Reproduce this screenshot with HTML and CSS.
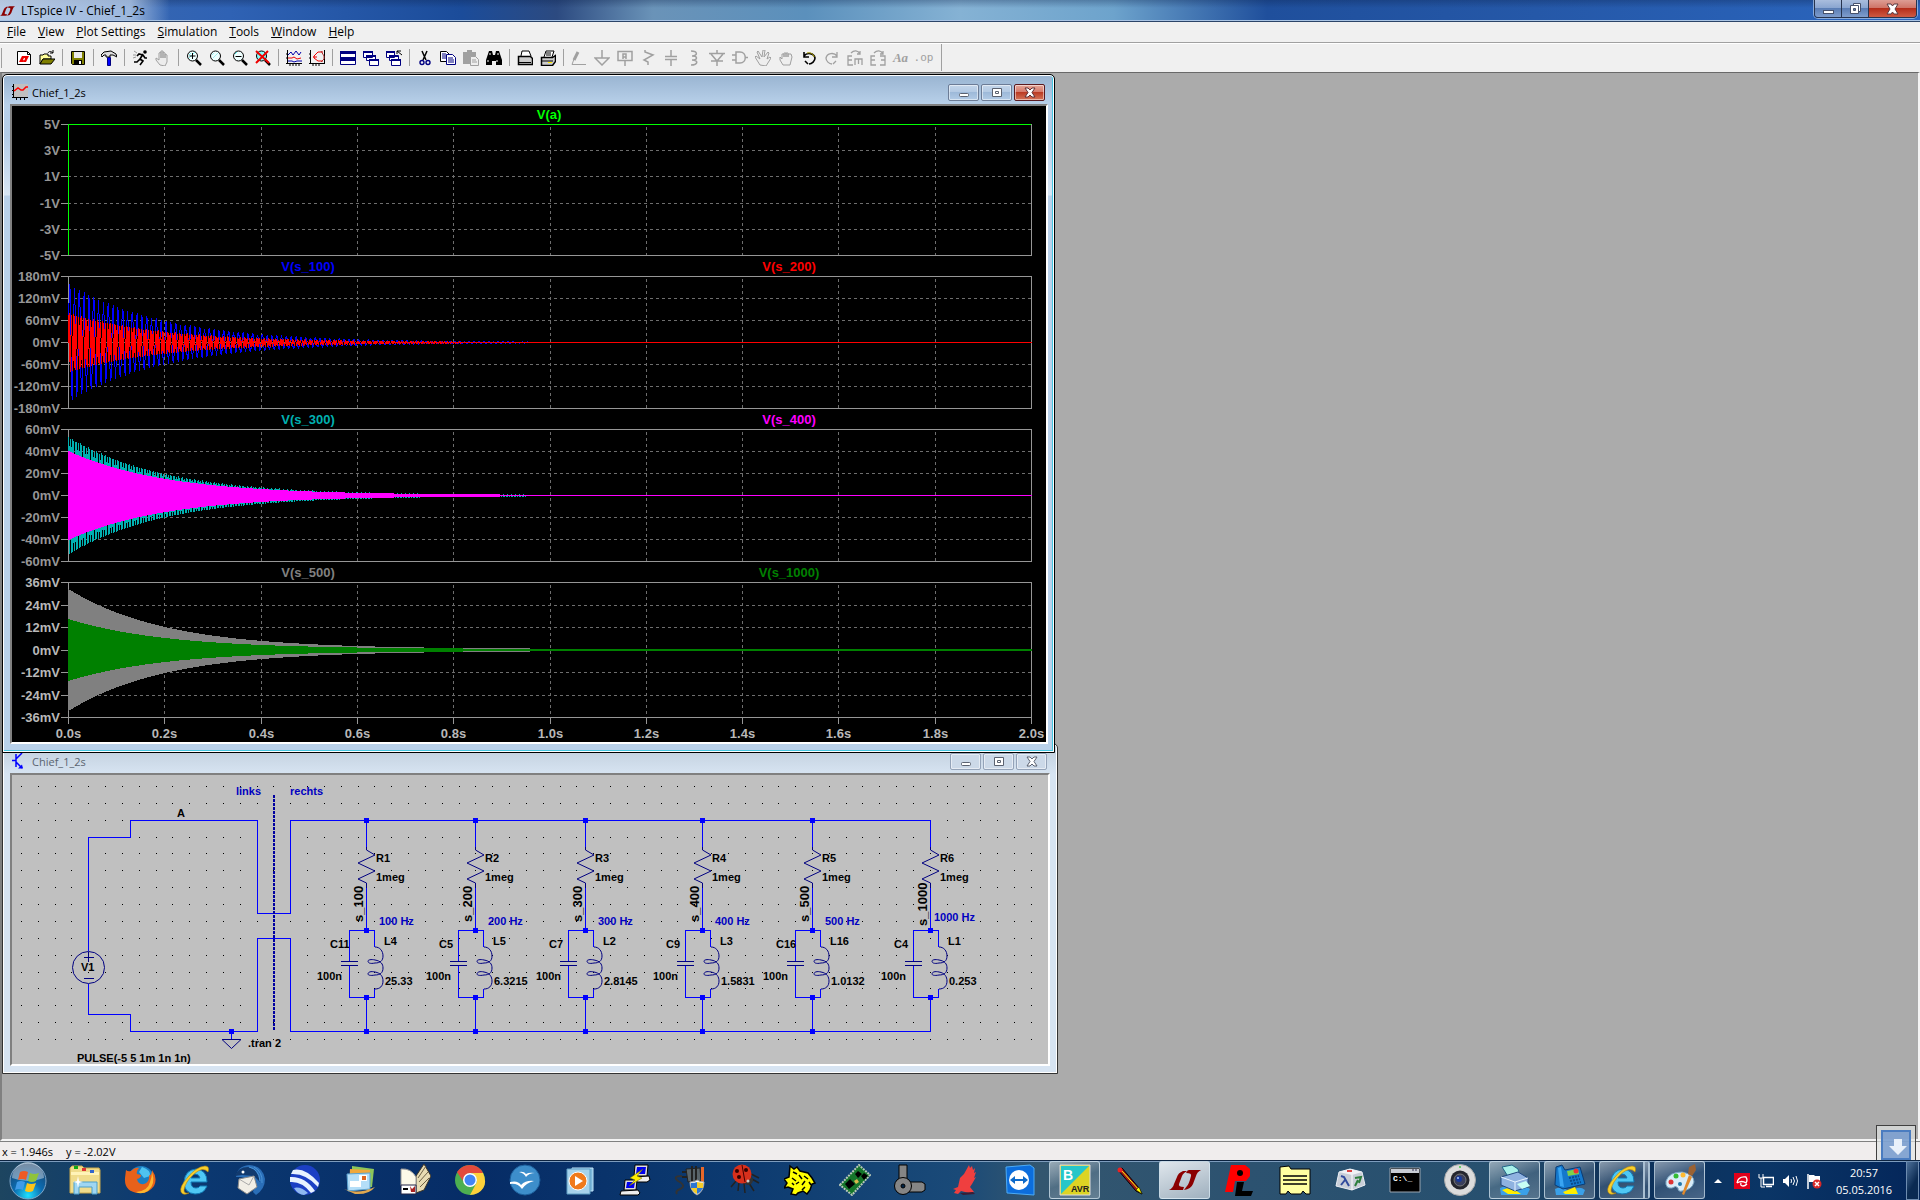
FILE: index.html
```html
<!DOCTYPE html>
<html lang="de">
<head>
    <meta charset="UTF-8">
    <meta name="viewport" content="width=device-width, initial-scale=1.0">
    <title>LTspice IV - Chief_1_2s</title>
    <link rel="stylesheet" href="styles.css">
</head>
<body>
    <!-- Title bar -->
    <header class="titlebar">
        <svg class="app-logo" viewBox="0 0 32 20" aria-hidden="true"><path fill="#8b0000" d="M20 0L14 1Q9 3 8 7L5 14Q4 18 0 20H14L15 17Q9 17 10 14L13 6Q14 3 20 0zM19 0H32Q28 2 27 6L24 14Q22 19 15 20L18 16Q20 14 22 6 23 3 17 3z"/></svg>
        <h1>LTspice IV - Chief_1_2s</h1>
        <div class="caption-buttons">
            <button aria-label="Minimize"><svg width="13" height="12"><rect x="1.5" y="7.5" width="10" height="3" fill="#fff" stroke="#47516b"/></svg></button>
            <button aria-label="Restore"><svg width="13" height="13"><path d="M4.5 1.5h7v8h-7z" fill="#fff" stroke="#47516b"/><path d="M1.5 3.5h8v8h-8z" fill="#fff" stroke="#47516b"/><path d="M4.5 6.5h2v2h-2z" fill="#5e7fb5" stroke="#47516b"/></svg></button>
            <button class="close" aria-label="Close"><svg width="13" height="12"><path d="M1 1h4l1.500 2L8 1h4L9 6l3 5H8L6.500 9 5 11H1l3-5z" fill="#fff" stroke="#5b3a42"/></svg></button>
        </div>
    </header>

    <nav class="menubar">
        <button><u>F</u>ile</button>
        <button><u>V</u>iew</button>
        <button><u>P</u>lot Settings</button>
        <button><u>S</u>imulation</button>
        <button><u>T</u>ools</button>
        <button><u>W</u>indow</button>
        <button><u>H</u>elp</button>
    </nav>

    <!-- Toolbar -->
    <div class="toolbar">
        <div class="group">
            <button aria-label="New schematic"><svg viewBox="0 0 16 16"><path d="M1.500 1.500h10l3 3v10h-13z" fill="#fff" stroke="#000"/><path d="M11.500 1.500v3h3" fill="none" stroke="#000"/><path d="M6 6h3l-2 4h1l-1 2H3l1-2zM8 6h5l-1 2-2 4H7l2-3z" fill="#e00"/></svg></button>
            <button aria-label="Open"><svg viewBox="0 0 16 16"><path d="M1 5h3l1-1h4v2h3v3H4l-3 5z" fill="#ff9" stroke="#000"/><path d="M1 14l3-5h12l-4 5z" fill="#808000" stroke="#000"/><path d="M9 3c1-2 3-2 5 0M14 0v3h-3" fill="none" stroke="#000"/></svg></button>
        </div>
        <div class="group">
            <button aria-label="Save"><svg viewBox="0 0 16 16"><path d="M1.500 1.500h13v13h-12l-1-1z" fill="#808000" stroke="#000"/><path d="M4 2h8v6H4z" fill="#ececec"/><path d="M4 10h8v5H4z" fill="#000"/><path d="M9 11h2v3H9z" fill="#fff"/></svg></button>
        </div>
        <div class="group">
            <button aria-label="Control panel"><svg viewBox="0 0 16 16"><path d="M0 5l3-3 7-1 5 3 1 3-4-2H9v2H5V5H3L1 7z" fill="#ddd" stroke="#000"/><path d="M6.500 7.500h3v8h-3z" fill="#00f" stroke="#000080"/></svg></button>
        </div>
        <div class="group">
            <button aria-label="Run"><svg viewBox="0 0 16 16"><circle cx="13" cy="2" r="1.800"/><path d="M11 4L8 9l3 2-3 4M8 9l-3 3H2M11 5L7 4 5 6M11 5l2 3h2" fill="none" stroke="#000" stroke-width="1.600"/><path d="M2 1l3 2M1 5h3M1 8l3-1" stroke="#999"/></svg></button>
            <button disabled aria-label="Halt"><svg viewBox="0 0 16 16"><path d="M5 15L1 10V8l3 2V3l2-1v6V1h2v7-6l2 1v5-4l2 1v7l-2 4z" fill="#ececec" stroke="#a0a0a0"/></svg></button>
        </div>
        <div class="group">
            <button aria-label="Zoom in"><svg viewBox="0 0 16 16"><circle cx="6.500" cy="6" r="5" fill="#efffff" stroke="#000"/><path d="M3 5l2-2M3 8l6-6" stroke="#7fefef"/><path d="M6.500 3v6M3.500 6h6" stroke="#000"/><path d="M10 10l5 5" stroke="#000" stroke-width="2.500"/></svg></button>
            <button aria-label="Pan"><svg viewBox="0 0 16 16"><circle cx="6.500" cy="6" r="5" fill="#efffff" stroke="#000"/><path d="M3 5l2-2M4 8l5-5" stroke="#9feeee"/><path d="M10 10l5 5" stroke="#000" stroke-width="2.500"/></svg></button>
            <button aria-label="Zoom back"><svg viewBox="0 0 16 16"><circle cx="6.500" cy="6" r="5" fill="#efffff" stroke="#000"/><path d="M3 4l2-2" stroke="#4fe0e0"/><path d="M3.500 6.500h6" stroke="#000"/><path d="M10 10l5 5" stroke="#000" stroke-width="2.500"/></svg></button>
            <button aria-label="Zoom to fit"><svg viewBox="0 0 16 16"><circle cx="6.500" cy="6" r="5" fill="#8ff" stroke="#000"/><path d="M10 10l5 5" stroke="#000" stroke-width="2.500"/><path d="M1 1l13 12M13 1L1 13" stroke="#e00" stroke-width="2"/></svg></button>
        </div>
        <div class="group">
            <button aria-label="Autorange"><svg viewBox="0 0 16 16"><path d="M1.500 0v14M0 13.500h16M4 13v3M7 13v3M10 13v3M13 13v3M0 4h2M0 8h2" stroke="#000"/><path d="M2 5l3-3 2 3 3-4 3 4 2-3" fill="none" stroke="#00a"/><path d="M2 8h4l2-1 3 2 4-1" fill="none" stroke="#e00"/><path d="M2 11h4l2 1 3-1h5" fill="none" stroke="#00a"/></svg></button>
            <button aria-label="FFT"><svg viewBox="0 0 16 16"><path d="M1.500 0v14M0 13.500h16M4 13v3M7 13v3M10 13v3M0 4h2M0 8h2" stroke="#000"/><path d="M15.500 0v14" stroke="#000"/><path d="M4 7h4M14 2H9L5 6v2l4 3h5" fill="none" stroke="#e00"/><path d="M12 1l3 5v3l-3 3" fill="none" stroke="#a33"/></svg></button>
        </div>
        <div class="group">
            <button aria-label="Tile"><svg viewBox="0 0 16 16"><path d="M.5 1.500h15v13H.5z" fill="#fff" stroke="#000080"/><path d="M0 1h16v3H0zM0 7h16v4H0z" fill="#000080"/></svg></button>
            <button aria-label="Cascade"><svg viewBox="0 0 16 16"><g fill="#fff" stroke="#000080"><path d="M.5 1.500h9v6h-9zM3.500 5.500h9v5h-9zM6.500 9.500h9v6h-9z"/></g><path d="M0 1h10v2H0zM3 5h10v2H3zM6 9h10v2H6z" fill="#000080"/></svg></button>
            <button aria-label="Close all"><svg viewBox="0 0 16 16"><g fill="#fff" stroke="#000080"><path d="M.5 1.500h8v6h-8zM3.500 5.500h9v5h-9zM5.500 9.500h9v6h-9z"/></g><path d="M0 1h9v2H0zM3 5h9v2H3zM5 9h10v2H5z" fill="#000080"/><path d="M16 5l-5-4M11 4V1h4" fill="none" stroke="#000"/></svg></button>
        </div>
        <div class="group">
            <button aria-label="Cut"><svg viewBox="0 0 16 16"><path d="M5 1l4 9M10 1L6 10" stroke="#000" stroke-width="1.500"/><g fill="none" stroke="#000080" stroke-width="1.400"><circle cx="5" cy="12.500" r="2"/><circle cx="11" cy="12.500" r="2"/></g></svg></button>
            <button aria-label="Copy"><svg viewBox="0 0 16 16"><path d="M.5 1.500h6l3 3v7h-9z" fill="#fff" stroke="#000"/><path d="M6.500 4.500h6l3 3v7h-9z" fill="#fff" stroke="#000080"/><path d="M2 4h4M2 6h4M2 8h4M8 8h5M8 10h6M8 12h6" stroke="#000080"/></svg></button>
            <button disabled aria-label="Paste"><svg viewBox="0 0 16 16"><path d="M0 2h4V0h5v2h4v12H0z" fill="#a0a0a0"/><path d="M7.500 6.500h5l3 3v6h-8z" fill="#eee" stroke="#a0a0a0"/><path d="M9 10h4M9 12h5" stroke="#a0a0a0"/></svg></button>
            <button aria-label="Find"><svg viewBox="0 0 16 16"><path d="M3 1h3l1 4h2l1-4h3l3 9v5h-6v-4H6v4H0v-5z"/><path d="M4 3v2M12 3v2M2 10v2M11 10v2" stroke="#fff"/></svg></button>
        </div>
        <div class="group">
            <button aria-label="Print setup"><svg viewBox="0 0 16 16"><path d="M4 6l1-5h7l2 5" fill="#fff" stroke="#000"/><path d="M1.500 6.500h12l2 2v6h-14z" fill="#ccc" stroke="#000" stroke-width="1.500"/><path d="M2 12.500h12" stroke="#000"/></svg></button>
            <button aria-label="Print"><svg viewBox="0 0 16 16"><path d="M4 7l2-6h8l-2 6" fill="#fff" stroke="#000"/><path d="M1.500 7.500h11l3-2v6l-3 4h-11z" fill="#ccc" stroke="#000" stroke-width="1.500"/><path d="M6 3h5M6 5h5M2 11h11" stroke="#000"/><path d="M8 12.500h4" stroke="#fe0"/></svg></button>
        </div>
        <div class="group">
            <button disabled aria-label="Wire"><svg viewBox="0 0 16 16"><path d="M7 2L3 10" stroke="#a0a0a0" stroke-width="3"/><path d="M1 14.500L3 9M1 14.500h14" stroke="#a0a0a0"/></svg></button>
            <button disabled aria-label="Ground"><svg viewBox="0 0 16 16"><path d="M8 0v8M1 8h14l-7 7z" fill="none" stroke="#a0a0a0" stroke-width="1.500"/></svg></button>
            <button disabled aria-label="Label net"><svg viewBox="0 0 16 16"><path d="M1 1.500h14v9H1zM8 10v6M6 9V4h3v5M6 7h3" fill="none" stroke="#a0a0a0" stroke-width="1.500"/></svg></button>
            <button disabled aria-label="Resistor"><svg viewBox="0 0 16 16"><path d="M5 0v2l8 3-9 5 4 2v3" fill="none" stroke="#a0a0a0" stroke-width="1.500"/></svg></button>
            <button disabled aria-label="Capacitor"><svg viewBox="0 0 16 16"><path d="M8 0v6M2 6.500h12M2 9.500h12M8 10v6" stroke="#a0a0a0" stroke-width="1.500"/></svg></button>
            <button disabled aria-label="Inductor"><svg viewBox="0 0 16 16"><path d="M5 1c7 0 7 5 1 5 6 0 6 4 0 4 7 0 6 5-1 5" fill="none" stroke="#a0a0a0" stroke-width="1.500"/></svg></button>
            <button disabled aria-label="Diode"><svg viewBox="0 0 16 16"><path d="M8 0v3M8 11v5M0 3.500h16M2 4l6 7 6-7M2 11h12" fill="none" stroke="#a0a0a0" stroke-width="1.500"/></svg></button>
            <button disabled aria-label="Component"><svg viewBox="0 0 16 16"><path d="M4 2h4c7 0 7 11 0 11H4zM0 5h4M0 10h4M13 7.500h3" fill="none" stroke="#a0a0a0" stroke-width="1.500"/></svg></button>
            <button disabled aria-label="Move"><svg viewBox="0 0 16 16"><path d="M5 15L0 7l1-1 4 3-3-7 1-1 4 6 1-7h2l-1 7 4-5 1 1-2 6 3-2 1 1-5 8z" fill="#eee" stroke="#a0a0a0"/></svg></button>
            <button disabled aria-label="Drag"><svg viewBox="0 0 16 16"><path d="M5 15L2 10V7l2 2V4h2v3-4h2v4-4h2v4-3h3l1 3-2 8z" fill="#eee" stroke="#a0a0a0"/></svg></button>
            <button aria-label="Undo"><svg viewBox="0 0 16 16"><path d="M3 6c3-4 10-3 11 2 0 3-3 6-6 6M3 2v5h5M4 11l3 3" fill="none" stroke="#000" stroke-width="1.600"/><path d="M6 3c3-1 7 1 7 4" fill="none" stroke="#b8a800"/></svg></button>
            <button disabled aria-label="Redo"><svg viewBox="0 0 16 16"><path d="M13 6C10 2 3 3 2 8c0 3 3 6 6 6M13 2v5H8M12 11l-3 3" fill="none" stroke="#a0a0a0" stroke-width="1.300"/></svg></button>
            <button disabled aria-label="Rotate"><svg viewBox="0 0 16 16"><path d="M5 6H1v9h5M1 10h4M8 15V9h7v6M11.500 9v5M4 3c3-3 7-3 9 1M13 1v3h-3" fill="none" stroke="#a0a0a0" stroke-width="1.300"/></svg></button>
            <button disabled aria-label="Mirror"><svg viewBox="0 0 16 16"><path d="M5 6H1v9h5M1 10h4M10 6h5v9h-5M15 10h-4M4 3c3-3 7-3 9 1M13 1v3h-3" fill="none" stroke="#a0a0a0" stroke-width="1.300"/></svg></button>
            <button disabled aria-label="Text" class="text-tool">Aa</button>
            <button disabled aria-label="SPICE directive" class="op-tool">.op</button>
        </div>
    </div>

    <!-- MDI area with both documents -->
    <main class="mdi">
        <section class="window schematic">
            <div class="window-title">
                <svg width="16" height="16"><path d="M4 1v13M0 7.500h4M4 6l6-6M4 9l6 6" fill="none" stroke="#00f" stroke-width="1.500"/><path d="M11 15.500H6l4-4z" fill="#00f"/></svg>
                <h2>Chief_1_2s</h2>
                <button aria-label="Minimize"><svg width="12" height="11"><rect x="1.500" y="6.500" width="9" height="3" rx="1" fill="#fff" stroke="#5b6270"/></svg></button>
                <button aria-label="Maximize"><svg width="12" height="11"><path d="M1.500 1.500h9v8h-9zM4.500 4.500h3v2h-3z" fill="#fff" stroke="#5b6270"/></svg></button>
                <button aria-label="Close"><svg width="12" height="11"><path d="M1 1h3l2 2 2-2h3L8 5.500 11 10H8L6 8l-2 2H1l3-4.500z" fill="#fff" stroke="#5b6270"/></svg></button>
            </div>
            <svg class="client" id="schematic" width="1036" height="289" viewBox="12 775 1036 289"></svg>
        </section>

        <section class="window plot">
            <div class="window-title">
                <svg width="16" height="16"><path d="M2 0h14v13H2z" fill="#c0c0c0"/><path d="M1.500 0v14M0 13.500h16M0 2.500h2M0 6.500h2M0 10.500h2M4.500 13v3M8.500 13v3M12.500 13v3" stroke="#000"/><path d="M2 7l4-3 3 2 2 0 3-3h2" fill="none" stroke="#f00" stroke-width="1.500"/></svg>
                <h2>Chief_1_2s</h2>
                <button aria-label="Minimize"><svg width="12" height="11"><rect x="1.500" y="6.500" width="9" height="3" rx="1" fill="#fff" stroke="#5b6270"/></svg></button>
                <button aria-label="Maximize"><svg width="12" height="11"><path d="M1.500 1.500h9v8h-9zM4.500 4.500h3v2h-3z" fill="#fff" stroke="#5b6270"/></svg></button>
                <button class="close" aria-label="Close"><svg width="12" height="11"><path d="M1 1h3l2 2 2-2h3L8 5.500 11 10H8L6 8l-2 2H1l3-4.500z" fill="#fff" stroke="#5d3036"/></svg></button>
            </div>
            <svg class="client" id="plot" width="1034" height="636" viewBox="12 106 1034 636"></svg>
        </section>
    </main>

    <footer class="statusbar">
        <span>x = 1.946s</span>
        <span>y = -2.02V</span>
        <div class="dropzone"><svg width="30" height="30"><path d="M11 7h8v7h5l-9 9-9-9h5z" fill="#e8f0fa"/></svg></div>
    </footer>

    <!-- Taskbar -->
    <div class="taskbar">
        <button class="start" aria-label="Start"><svg viewBox="0 0 38 38">
            <defs><radialGradient id="orb" cx=".5" cy=".9" r=".9"><stop offset="0" stop-color="#1fe0ff"/><stop offset=".45" stop-color="#0b6bb0"/><stop offset="1" stop-color="#1c3f66"/></radialGradient></defs>
            <circle cx="19" cy="19" r="18" fill="url(#orb)" stroke="#7fa6c8"/><path d="M3 16a16 16 0 0 1 32 0q-16 6-32 0z" fill="#fff" opacity=".4"/>
            <path d="M11 10q4-2 8 0l-2 8q-4-2-8 0z" fill="#ee5a24"/><path d="M21 11q4 2 9 0l-3 8q-4 2-8 0z" fill="#8fc33a"/><path d="M8 20q4-2 8 0l-2 8q-4-2-8 0z" fill="#3f9be8"/><path d="M18 21q4 2 9 0l-3 8q-4 2-8 0z" fill="#fcc419"/>
        </svg></button>
        <button aria-label="Explorer"><svg viewBox="0 0 32 32"><path d="M1 4l2-2h10l2 2h15l1 2v23H1z" fill="#f0dc8c" stroke="#c9a94c"/><path d="M2 8h28v3H2z" fill="#fff3b8"/><path d="M5 2h4v3H5z" fill="#1a1"/><path d="M13 4h4v3h-4z" fill="#d33"/><path d="M21 6h4v3h-4z" fill="#36c"/><path d="M5 18h23v12h-5v-7H10v7H5z" fill="#9fd6f2" stroke="#4d9fc9"/><path d="M9 12l1 5 4 1-4 1-1 5-1-5-4-1 4-1z" fill="#fff"/></svg></button>
        <button aria-label="Firefox"><svg viewBox="0 0 32 32"><circle cx="17" cy="15" r="13" fill="#1b7fc4"/><path d="M18 3q9 3 8 9l-6 2-5-6z" fill="#4fc3f0"/><path d="M2 6q2 2 5 1 4-4 8-3-3 3-2 6l4 1q0 3-4 4 1 6 7 5 6-2 5-9 3 1 3-5 6 8 2 16-6 8-15 7Q0 28 1 14z" fill="#e8611a"/><path d="M28 8q4 12-4 19-7 4-12 1 12-1 14-10 2-5 2-10z" fill="#fdb62e"/></svg></button>
        <button aria-label="Internet Explorer"><svg viewBox="0 0 32 32"><path d="M28 18H12q0 6 5 6 3 0 4-2h7q-3 8-12 8Q5 29 5 18 6 6 17 5q11 1 11 13zm-7-4q-1-4-5-4-3 0-4 4z" fill="#4fc8f4" stroke="#127ab5"/><path d="M29 8q2-6-3-6Q17 3 9 13 0 23 2 28q2 4 8 1-5 1-5-3 1-8 10-16 9-8 14-2z" fill="#f8cf2c" stroke="#b8860b" stroke-width=".6"/></svg></button>
        <button aria-label="Thunderbird"><svg viewBox="0 0 32 32"><path d="M2 13Q3 2 15 1q14 1 16 14 0 10-9 16l-3-3 3-12L6 13z" fill="#2a6eb8"/><path d="M1 12q3-9 13-9 10 2 12 15l-6-6-12-1z" fill="#123a6e"/><path d="M5 15l15-3 3 11-10 7-9-6z" fill="#f1eee6" stroke="#8a8a8a"/><path d="M5 15l10 6 5-9" fill="none" stroke="#aaa"/><path d="M15 3q10 2 11 14M20 3q9 5 8 16" fill="none" stroke="#4a95d8"/><circle cx="9" cy="8" r="1.500" fill="#fff"/></svg></button>
        <button aria-label="Google Earth"><svg viewBox="0 0 32 32"><circle cx="16" cy="16" r="15" fill="#1c3fc4"/><path d="M4 6q12-3 26 13l-1 4Q17 9 2 10zM1 13q15-1 25 14l-4 2Q13 17 1 18z" fill="#e8f2ff"/><path d="M5 24q6-2 14 5l-4 2q-6 0-10-7z" fill="#8fb8f0"/></svg></button>
        <button aria-label="Live Mail"><svg viewBox="0 0 32 32"><path d="M8 2l22 3-2 18H8z" fill="#8cc65a"/><path d="M6 5l20 1-1 20H5z" fill="#f0a83c"/><path d="M3 10l23-1v16L4 27z" fill="#b4def8" stroke="#5aa2d0"/><path d="M15 11h8v6h-8z" fill="#fff"/><path d="M18 12h4v4h-4z" fill="#d62"/><path d="M6 17h11v6H6z" fill="#fff"/><path d="M0 25q14 6 31-2-6 8-20 7z" fill="#e0a850"/></svg></button>
        <button aria-label="Reader"><svg viewBox="0 0 32 32"><path d="M17 12L25 0l7 12-7 14-8 3z" fill="#e8dcb4" stroke="#3a3326"/><path d="M2 5q10-1 15 8v16Q11 22 2 22z" fill="#fdf9e8" stroke="#999"/><path d="M19 14l8-12M20 18l9-10M21 23l9-9" stroke="#6b5f45"/><path d="M2 21h15v9H2z" fill="#fff" stroke="#224"/><path d="M4 25h5" stroke="#000" stroke-width="2"/><path d="M11 22l2 3 3-3v6h-4z" fill="#a22"/></svg></button>
        <button aria-label="Chrome"><svg viewBox="0 0 32 32"><circle cx="16" cy="16" r="15" fill="#4caf50"/><path d="M3 8Q8 1 16 1q9 0 13 8H16q-6 1-7 8z" fill="#e34a3c"/><path d="M29 9q6 13-5 20-4 2-8 2l7-13q0-6-5-9z" fill="#fdd13a"/><circle cx="16" cy="16" r="7" fill="#fff"/><circle cx="16" cy="16" r="5.500" fill="#4285f4"/></svg></button>
        <button aria-label="OpenOffice"><svg viewBox="0 0 32 32"><circle cx="16" cy="16" r="15" fill="#3d8ecb" stroke="#1c5f9c"/><path d="M10 8q5-1 7 2 3-2 9-1-6 0-9 4-2-4-7-5zM1 18q8-2 11 3 5-5 13-4-8 2-12 8-4-6-12-5z" fill="#fff"/></svg></button>
        <button aria-label="Media Player"><svg viewBox="0 0 32 32"><path d="M8 4h21v23H8z" fill="#7cb8dc" stroke="#c4e6fa"/><path d="M3 5h23v25H3z" fill="#a6d3ec" stroke="#5f9fc4"/><circle cx="14" cy="17" r="9" fill="#f07a1c" stroke="#fff"/><path d="M11 12v10l8-5z" fill="#fff"/></svg></button>
        <button aria-label="PuTTY"><svg viewBox="0 0 32 32"><g stroke="#000"><path d="M16 1h13l-1 11H15z" fill="#ddd"/><path d="M15 13l15-1 1 4-3 2H16z" fill="#eee"/><path d="M6 16h12l-1 10H5z" fill="#ddd"/><path d="M2 27l17-1 2 3-2 2H1z" fill="#eee"/></g><path d="M18 3h9l-1 7h-9zM8 18h8l-1 6H7z" fill="#00e"/><path d="M24 5l-13 9 5 2-6 6 13-8-5-2z" fill="#fe0" stroke="#660" stroke-width=".5"/></svg></button>
        <button aria-label="Device setup"><svg viewBox="0 0 32 32"><path d="M12 5l14-1 1 13-13 1z" fill="#59646a" stroke="#222"/><path d="M8 8h5M8 13h5M18 2v18M22 2v18" stroke="#222" stroke-width="2"/><path d="M8 12Q-2 12 4 17q9 5 2 8-5 2-3 5" fill="none" stroke="#333" stroke-width="2"/><path d="M27 3h3v17h-3z" fill="#e8682a"/><path d="M16 18q5 0 7-2 3 2 7 2 0 9-7 13-7-4-7-13z" fill="#fff" stroke="#aaa"/><path d="M17 19q4 0 6-1v6h-6zM23 24h6q-2 4-6 6z" fill="#2c76d2"/><path d="M23 18l6 1v5h-6zM17 24h6v6q-4-2-6-6z" fill="#f5cc28"/></svg></button>
        <button aria-label="Ladybug"><svg viewBox="0 0 32 32"><path d="M7 17l-5 6M10 18l-1 9M15 19l1 10M18 16l7 11M22 10l8 4M21 14l9 5" stroke="#222" stroke-width="1.500" fill="none"/><circle cx="19" cy="16" r="5" fill="#333"/><circle cx="13" cy="10" r="9.500" fill="#d8301c"/><path d="M13 1l3 17" stroke="#400"/><g fill="#300"><circle cx="8" cy="7" r="2"/><circle cx="17" cy="6" r="2"/><circle cx="10" cy="13" r="2"/></g><circle cx="19" cy="17" r="1.500" fill="#ccc"/></svg></button>
        <button aria-label="Leopard"><svg viewBox="0 0 32 32"><path d="M6 2l4 3 3-2 3 4 8 2 4 5 3 5-3 1-2 6-3 4-4-3-5 2-2 2-5-1 2-5-5-2-4 1 3-5-3-4 5-2z" fill="#ff0" stroke="#000" stroke-width="1.500"/><path d="M9 8l4 2M15 11l3 4M8 14l4 3M20 12l4 3M12 20l3-2M18 21l3-4M25 18l2 3M18 26l3-3M8 19l2 2" stroke="#000" stroke-width="1.500"/></svg></button>
        <button aria-label="Circuit board"><svg viewBox="0 0 32 32"><path d="M1 21L20 1l11 10-18 20z" fill="#15762b" stroke="#b8c8b8" stroke-width="2" stroke-dasharray="2 1"/><path d="M6 20l5-5 5 5-6 5zM16 10l3-3 4 3-4 4zM22 12l3-3 4 3-4 4z" fill="#000"/><path d="M15 17l3-2 2 3-3 2z" fill="#d8b84c"/></svg></button>
        <button aria-label="Gearbox"><svg viewBox="0 0 32 32"><g fill="#858585" stroke="#000"><path d="M5 1h8v15H5zM14 18h14l3 2v6l-3 2H14z"/><circle cx="9" cy="22" r="8.500"/></g><circle cx="9" cy="22" r="2" fill="#024" stroke="#000"/></svg></button>
        <button aria-label="Eagle"><svg viewBox="0 0 32 32"><path d="M20 1l1 3 2-2 1 4 2-2-1 5 2-1-2 6 2-1-4 7-2 3 4 5-5 1-8-2-3 3-4-1 2-3-3-1 5-2 2-9 4-4z" fill="#ef3f3f"/><path d="M11 29l13-1 2 2-12 1z" fill="#3a1d35"/></svg></button>
        <button aria-label="TeamViewer"><svg viewBox="0 0 32 32"><path d="M2 3l24-2 4 3v27L3 29z" fill="#0c6ddc" stroke="#4dabf5"/><circle cx="15" cy="16" r="10" fill="#fff"/><path d="M6 16l5-4v3h8v-3l5 4-5 4v-3h-8v3z" fill="#0d69c9"/></svg></button>
        <button class="running" aria-label="Bascom AVR"><svg viewBox="0 0 32 32"><path d="M1 1h30v30H1z" fill="#ddd423" stroke="#ddd"/><path d="M2 2h28L2 30z" fill="#26c6c9"/><text x="4" y="16" class="icon-b">B</text><text x="12" y="28" class="icon-avr">AVR</text></svg></button>
        <button aria-label="Pencil"><svg viewBox="0 0 32 32"><path d="M4 6l4-2 17 20 3 6-6-3z" fill="#9b1717" stroke="#000"/><path d="M8 7l17 19" stroke="#ff0"/><path d="M22 26l3-3 3 7z" fill="#ff0" stroke="#000" stroke-width=".5"/><circle cx="6" cy="6" r="2.500" fill="#e22"/></svg></button>
        <button class="active" aria-label="LTspice"><svg viewBox="0 0 32 20"><path fill="#8b0000" d="M20 0L14 1Q9 3 8 7L5 14Q4 18 0 20H14L15 17Q9 17 10 14L13 6Q14 3 20 0zM19 0H32Q28 2 27 6L24 14Q22 19 15 20L18 16Q20 14 22 6 23 3 17 3z"/></svg></button>
        <button aria-label="PL"><svg viewBox="0 0 32 32"><path d="M7 1h14l5 4v7l-4 5H11L9 28H1z" fill="#f00"/><circle cx="16" cy="9" r="3" fill="#000"/><path d="M13 18h7l-2 9h11l-2 5H11z" fill="#000"/></svg></button>
        <button aria-label="Notes"><svg viewBox="0 0 32 32"><path d="M1 3l9-1 2 3h19v25h-4l-3-3-2 3H12l-3-3-2 3H1z" fill="#ffffa0" stroke="#000"/><path d="M4 12h24M4 16h24M4 20h24" stroke="#000" stroke-width="1.500"/></svg></button>
        <button aria-label="Cube"><svg viewBox="0 0 32 32"><path d="M5 8l11-3 12 3 3 13-13 5L2 22z" fill="#c9ced8" stroke="#eceff4"/><path d="M16 5l12 3-10 3-13-3z" fill="#f0f2f6"/><path d="M18 11v15" stroke="#fff"/><path d="M7 12l3 1 5 9M11 16l-4 5" fill="none" stroke="#314a9c" stroke-width="2"/><path d="M21 22l3-6M21 14l6-1-2 6" fill="none" stroke="#2c7e3c" stroke-width="2"/><path d="M13 7h5" stroke="#d44" stroke-width="2"/></svg></button>
        <button aria-label="Command prompt"><svg viewBox="0 0 32 32"><path d="M1 4h30v24H1z" fill="#000" stroke="#9aa5b0"/><path d="M2 5h28v4H2z" fill="#c8ccd4"/><path d="M23 6h2M26 6h2" stroke="#335"/><text x="4" y="17" class="icon-cmd">C:\_</text></svg></button>
        <button aria-label="Webcam"><svg viewBox="0 0 32 32"><circle cx="16" cy="16" r="15.500" fill="#dcdcdc" stroke="#aaa"/><circle cx="16" cy="16" r="9.500" fill="#25262e"/><circle cx="16" cy="16" r="6" fill="#3a3f5c" stroke="#777"/><circle cx="15" cy="15" r="3" fill="#16389a"/><circle cx="14" cy="14" r="1" fill="#aac8ff"/><circle cx="16" cy="3" r="1" fill="#4c4"/></svg></button>
        <button class="running" aria-label="Printer"><svg viewBox="0 0 32 32"><path d="M1 24q5-3 10 0t10 0 10 1l-3 6H2z" fill="#3aa0e8"/><path d="M3 26l9-3 10 7H9z" fill="#fe0"/><path d="M3 3l10-2 6 4 2 7-11 2z" fill="#a8f0e8" stroke="#268"/><path d="M2 13l17-5 10 6v9l-13 4-14-6z" fill="#8fb2e0" stroke="#234a80"/><path d="M2 13l14 5v9M16 18l13-4" fill="none" stroke="#e8f4ff"/><path d="M18 20l9-3 4 5-8 3z" fill="#c8fff4"/></svg></button>
        <button class="running" aria-label="Phone"><svg viewBox="0 0 32 32"><path d="M1 25q5-3 10 0t10 0 10 1l-2 5H2z" fill="#3aa0e8"/><path d="M9 28l12-5 3 7H11z" fill="#fe0"/><path d="M2 3l6-2 3 5 15-3 5 17-22 5-8-4z" fill="#1478cc" stroke="#0a3c74"/><path d="M4 4l3-1 3 20-4-1z" fill="#39a5f2"/><path d="M13 7l11-2 1 5-11 2z" fill="#7fd04a"/><circle cx="22" cy="7" r="2.500" fill="#e33"/><path d="M15 14l10-2M16 17l10-2M17 20l10-2" stroke="#0a4a8c" stroke-width="2" stroke-dasharray="2 1"/></svg></button>
        <button class="running stacked" aria-label="Internet Explorer windows"><svg viewBox="0 0 32 32"><path d="M28 18H12q0 6 5 6 3 0 4-2h7q-3 8-12 8Q5 29 5 18 6 6 17 5q11 1 11 13zm-7-4q-1-4-5-4-3 0-4 4z" fill="#4fc8f4" stroke="#127ab5"/><path d="M29 8q2-6-3-6Q17 3 9 13 0 23 2 28q2 4 8 1-5 1-5-3 1-8 10-16 9-8 14-2z" fill="#f8cf2c" stroke="#b8860b" stroke-width=".6"/></svg></button>
        <button class="running" aria-label="Paint"><svg viewBox="0 0 32 32"><path d="M2 17Q5 8 18 8q12 2 12 10-2 8-12 9-4 1-4-3-2-3-6 0-7 1-6-7z" fill="#d8ecf8" stroke="#7ba6c4"/><circle cx="7" cy="18" r="2.500" fill="#d33"/><circle cx="12" cy="12" r="2.500" fill="#3b3"/><circle cx="19" cy="11" r="2.500" fill="#fb3"/><circle cx="16" cy="20" r="2" fill="#27a"/><path d="M18 30l7-19 3 2-8 18z" fill="#e08a2c"/><path d="M24 10l1-7 6-3 1 6-4 6z" fill="#9a6234"/></svg></button>

        <div class="tray">
            <button aria-label="Show hidden icons"><svg viewBox="0 0 16 16"><path d="M4 10l4-4 4 4z" fill="#fff"/></svg></button>
            <button aria-label="Antivirus"><svg viewBox="0 0 16 16"><path d="M0 0h16v16H0z" fill="#e2001a"/><path d="M3 10q1-7 9-6 2 3 0 6-4-3-9 0M7 10q-1 3 2 3 2 0 4-2" fill="none" stroke="#fff" stroke-width="1.300"/></svg></button>
            <button aria-label="Network"><svg viewBox="0 0 16 16"><path d="M5.500 4.500h10v7h-10zM8 13.500h6" fill="none" stroke="#fff" stroke-width="1.500"/><path d="M1 1v4h4V1M3 5v9h4" fill="none" stroke="#fff"/></svg></button>
            <button aria-label="Volume"><svg viewBox="0 0 16 16"><path d="M1 6h2l4-4v12l-4-4H1z" fill="#fff"/><path d="M9 6q1 2 0 4M11 4q3 4 0 8M14 3q3 5 0 10" fill="none" stroke="#fff"/></svg></button>
            <button aria-label="Action center"><svg viewBox="0 0 16 16"><path d="M2 1v15" stroke="#fff" stroke-width="1.500"/><path d="M3 2h5l1 1h5v7H8L7 9H3z" fill="#fff"/><circle cx="11" cy="11" r="4.500" fill="#d62828"/><path d="M9 9l4 4M13 9l-4 4" stroke="#fff" stroke-width="1.500"/></svg></button>
        </div>
        <div class="clock"><time>20:57</time><span>05.05.2016</span></div>
        <button class="show-desktop" aria-label="Show desktop"></button>
    </div>

    <script src="script.js"></script>
</body>
</html>
```

FILE: styles.css
```css
* {
    box-sizing: border-box;
}
body {
    margin: 0;
    height: 100vh;
    display: flex;
    flex-direction: column;
    overflow: hidden;
    background: #f0f0f0;
    font-family: "Open Sans", "Noto Sans", sans-serif;
    font-size: 12px;
    color: #000;
}
button {
    font: inherit;
    color: inherit;
    background: none;
    border: 0;
    padding: 0;
    margin: 0;
}
svg {
    display: block;
    flex: none;
}
h1, h2 {
    margin: 0;
    font-size: 12px;
    font-weight: normal;
}
h2 {
    font-size: 11px;
}

/* Title bar */
.titlebar {
    height: 22px;
    display: flex;
    flex: none;
    align-items: center;
    gap: 6px;
    background:
        linear-gradient(90deg, rgba(225, 235, 248, 0.75) 0, rgba(200, 218, 240, 0.7) 130px, transparent 170px),
        linear-gradient(180deg, rgba(10, 30, 70, 0.3), transparent 8px),
        linear-gradient(90deg, #3d6aae 0, #2f62b4 12%, #1b4c9a 24%, #2c4a80 29%, #6a93b8 34%, #5b90bc 42%, #85b2d4 50%, #6da3cc 58%, #1f4f9c 66%, #2558a8 80%, #2b66bf 100%);
    border-bottom: 1px solid #2c4468;
    box-shadow: inset 0 -1px 0 #a9c4e4;
}
.app-logo {
    width: 15px;
    height: 10px;
}
.caption-buttons {
    display: flex;
    align-self: flex-start;
    margin-left: auto;
    margin-right: 3px;
    height: 18px;
    border: 1px solid #27344f;
    border-top: 0;
    border-radius: 0 0 4px 4px;
    box-shadow: 0 0 0 1px rgba(200, 220, 245, 0.6);
    overflow: hidden;
}
.caption-buttons button {
    width: 27px;
    display: grid;
    place-items: center;
    border-right: 1px solid #27344f;
    background: linear-gradient(#a9bddd 0, #8ba6d1 45%, #587bb3 46%, #7f9dcc 100%);
}
.caption-buttons .close {
    width: 47px;
    border-right: 0;
    background: linear-gradient(#dd9d94 0, #cf7568 45%, #b32a17 46%, #cd5a43 100%);
}

/* Menu and toolbar */
.menubar {
    height: 21px;
    display: flex;
    flex: none;
    padding: 0 1px 2px;
    border-bottom: 1px solid #a0a0a0;
}
.menubar button {
    padding: 0 6px;
}
.toolbar {
    height: 29px;
    display: flex;
    flex: none;
    align-items: center;
    border-top: 1px solid #fff;
    padding-left: 4px;
    padding-bottom: 1px;
}
.toolbar::before {
    content: "";
    width: 7px;
    height: 20px;
    margin-left: -3px;
    margin-right: 3px;
    border-left: 1px solid #a0a0a0;
}
.group {
    display: flex;
    padding-right: 4px;
    margin-right: 3px;
    border-right: 1px solid #a0a0a0;
}
.group:last-child {
    padding: 5px 6px 5px 0;
}
.group button {
    width: 23px;
    height: 17px;
    display: grid;
    place-items: center;
}
.group svg {
    width: 16px;
    height: 16px;
}
.group .text-tool {
    color: #a0a0a0;
    font: italic bold 13px "Liberation Serif", serif;
}
.group .op-tool {
    color: #a0a0a0;
    font: 11px "DejaVu Sans Mono", monospace;
}

/* MDI area */
.mdi {
    flex: 1;
    position: relative;
    overflow: hidden;
    background: #ababab;
    border: solid #696969;
    border-width: 1px 2px 2px 2px;
    border-right-color: #f4f4f4;
    border-bottom-color: #f4f4f4;
    border-left-color: #808080;
}
.window {
    position: absolute;
    left: 0;
    padding: 0 6px 6px;
    border: 1px solid #333;
    border-radius: 5px 5px 0 0;
    box-shadow: inset 0 0 0 1px #fff;
    display: flex;
    flex-direction: column;
}
.window.plot {
    top: 1px;
    padding: 1px 6px 8px 7px;
    border-color: #000;
    background: linear-gradient(#99b4d1 0, #b9d1ea 30px, #b4cde8 60px, #d8e6f4 120px, #b9d1ea 121px);
    box-shadow: inset 0 0 0 1px #fff, inset -1px -1px 0 1px #45c6e0;
}
.window.schematic {
    top: 670px;
    padding: 1px 7px 7px;
    background: linear-gradient(#bfcddb 0, #d7e4f2 30px);
}
.window-title {
    height: 28px;
    display: flex;
    align-items: center;
    gap: 2px;
    padding: 4px 3px 0 2px;
}
.window-title h2 {
    flex: 1;
    padding-left: 2px;
}
.schematic h2 {
    color: #5a6470;
}
.window-title button {
    width: 31px;
    height: 17px;
    display: grid;
    place-items: center;
    border: 1px solid #6c7c96;
    border-radius: 2px;
    box-shadow: inset 0 0 0 1px rgba(255, 255, 255, 0.5);
    background: linear-gradient(#c4d6ea 0, #b4cae4 45%, #9cb8d8 46%, #b2cbe6 100%);
}
.schematic button {
    border-color: #94a3b8;
    background: #ccd9e8;
}
.window-title .close {
    border-color: #5a1a20;
    background: linear-gradient(#e5a79b 0, #d67b6c 45%, #b9371f 46%, #d4755a 100%);
}
.client {
    box-sizing: content-box;
    border: 2px solid #808080;
    border-right-color: #fff;
    border-bottom-color: #fff;
}
#plot {
    background: #000;
    font: bold 13px "Liberation Sans", Arial, sans-serif;
    fill: #969696;
}
#schematic {
    background: #c0c0c0;
    font: bold 11px "Liberation Sans", Arial, sans-serif;
}

/* Plot lines */
.frame, .grid, .trace, .tick {
    fill: none;
    shape-rendering: crispEdges;
}
.frame, .tick {
    stroke: #969696;
}
.grid {
    stroke: #6e6e6e;
    stroke-dasharray: 3 3;
}
.last {
    fill: #b8b8b8;
}

/* Schematic lines */
.wire {
    fill: none;
    stroke: #00f;
    shape-rendering: crispEdges;
}
.symbol {
    fill: none;
    stroke: #000080;
}
.node {
    fill: #00f;
}
.comment {
    fill: #0000c0;
}
.netname {
    font-size: 13px;
}
.divider {
    stroke: #0000a0;
    stroke-width: 2;
    stroke-dasharray: 3 1;
}

/* Status bar */
.statusbar {
    position: relative;
    height: 19px;
    display: flex;
    flex: none;
    align-items: center;
    gap: 13px;
    padding-left: 2px;
    border-top: 1px solid #808080;
    background: #f0eded;
    font-size: 11px;
}
.dropzone {
    position: absolute;
    right: 4px;
    bottom: 0;
    padding: 4px 4px 0;
    border: 1px solid #404040;
    border-bottom: 0;
    background: rgba(225, 228, 226, 0.7);
}
.dropzone svg {
    border: 2px solid #4a7cc0;
    background: rgba(110, 150, 205, 0.8);
}

/* Taskbar */
.taskbar {
    height: 40px;
    display: flex;
    flex: none;
    color: #fff;
    border-top: 1px solid #0c2340;
    box-shadow: inset 0 1px 0 #7d9cbd;
    background: linear-gradient(90deg, #1d4560 0, #0c3a72 8%, #062c66 25%, #0c3a70 38%, #1a4a78 50%, #33566f 54%, #2c5270 65%, #27506f 78%, #0e3158 84%, #0a3566 92%, #04265a 100%);
}
.taskbar button {
    display: grid;
    place-items: center;
}
.taskbar > button {
    flex: 0 1 51px;
    margin: 0 2px 1px;
    border-radius: 3px;
}
.taskbar > button svg {
    width: 32px;
    height: 32px;
}
.taskbar > .start {
    flex-basis: 55px;
    margin: 0 2px 0 0;
}
.taskbar > .start svg {
    width: 38px;
    height: 38px;
}
.taskbar > .running, .taskbar > .active {
    border: 1px solid rgba(210, 228, 240, 0.7);
    background: linear-gradient(160deg, rgba(255, 255, 255, 0.5), rgba(255, 255, 255, 0.15) 50%, rgba(255, 255, 255, 0.25));
}
.taskbar > .active {
    background: linear-gradient(160deg, #dfe6ec, #9fb0be);
}
.taskbar > .stacked {
    border-right: 7px double #a9bfd2;
}
.icon-b {
    font: bold 14px "Liberation Sans", sans-serif;
    fill: #fff;
}
.icon-avr {
    font: bold 9px "Liberation Sans", sans-serif;
    fill: #222;
}
.icon-cmd {
    font: bold 8px "Liberation Mono", monospace;
    fill: #fff;
}
.tray {
    display: flex;
    align-items: center;
    margin-left: auto;
    gap: 8px;
}
.tray svg {
    width: 16px;
    height: 16px;
}
.clock {
    width: 84px;
    display: flex;
    flex-direction: column;
    align-items: center;
    justify-content: center;
    font-size: 11px;
    line-height: 17px;
}
.taskbar > .show-desktop {
    flex: none;
    width: 13px;
    margin: 0 1px 0 0;
    border: 1px solid #6d8cb0;
    border-radius: 0;
    background: linear-gradient(120deg, #4d7099, #0a2a52 60%);
}
```

FILE: script.js
```js
const NS = 'http://www.w3.org/2000/svg';

function add(parent, name, attrs, text) {
    const el = document.createElementNS(NS, name);
    for (const key in attrs) {
        el.setAttribute(key, attrs[key]);
    }
    if (text !== undefined) {
        el.textContent = text;
    }
    parent.appendChild(el);
    return el;
}

// Waveform plot
const plot = document.getElementById('plot');
const X0 = 68;
const X1 = 1031;

const panes = [
    { top: 124, bottom: 255, labels: ['5V', '3V', '1V', '-1V', '-3V', '-5V'], traces: [] },
    {
        top: 276, bottom: 408, max: 180,
        labels: ['180mV', '120mV', '60mV', '0mV', '-60mV', '-120mV', '-180mV'],
        traces: [
            { name: 'V(s_100)', color: '#0000ff', freq: 100, amp: 160 },
            { name: 'V(s_200)', color: '#ff0000', freq: 200, amp: 80 }
        ]
    },
    {
        top: 429, bottom: 561, max: 60,
        labels: ['60mV', '40mV', '20mV', '0mV', '-20mV', '-40mV', '-60mV'],
        traces: [
            { name: 'V(s_300)', color: '#00b0b0', freq: 300, amp: 53 },
            { name: 'V(s_400)', color: '#ff00ff', freq: 400, amp: 40 }
        ]
    },
    {
        top: 582, bottom: 717, max: 36,
        labels: ['36mV', '24mV', '12mV', '0mV', '-12mV', '-24mV', '-36mV'],
        traces: [
            { name: 'V(s_500)', color: '#808080', freq: 500, amp: 32 },
            { name: 'V(s_1000)', color: '#008000', freq: 1000, amp: 16 }
        ]
    }
];

// Damped sine, time constant 2RC = 0.2s
function tracePath(pane, trace) {
    const mid = Math.floor((pane.top + pane.bottom) / 2);
    const base = (pane.top + pane.bottom) % 2 ? 2 : 1;
    const scale = (pane.bottom - pane.top) / 2 / pane.max;
    let d = '';

    // From 400 Hz on a period is too narrow to resolve, only the envelope shows
    if (trace.freq >= 400) {
        for (let x = X0; x <= X1; x++) {
            const t = (x - X0) / (X1 - X0) * 2;
            const h = Math.round(trace.amp * Math.exp(-5 * t) * scale);
            d += `M${x + 0.5} ${mid - h}V${mid + h + base}`;
        }
        return d;
    }

    const samples = trace.freq <= 200 ? 12 : 8;
    const count = 2 * trace.freq * samples;
    for (let i = 0; i <= count; i++) {
        const t = i / trace.freq / samples;
        const v = trace.amp * Math.exp(-5 * t) * Math.sin(2 * Math.PI * i / samples);
        const x = Math.round(X0 + t / 2 * (X1 - X0)) + 0.5;
        const y = mid - Math.round(v * scale) + 0.5;
        d += (i ? 'L' : 'M') + x + ' ' + y;
    }
    return d;
}

panes.forEach(function (pane, index) {
    const last = index === panes.length - 1;
    const count = pane.labels.length - 1;

    pane.labels.forEach(function (label, i) {
        const y = Math.round(pane.top + i * (pane.bottom - pane.top) / count) + 0.5;
        if (i > 0 && i < count) {
            add(plot, 'path', { class: 'grid', d: `M${X0} ${y}H${X1}` });
        }
        add(plot, 'path', { class: 'tick', d: `M${X0 - 7} ${y}H${X0}` });
        add(plot, 'text', { x: 60, y: y + 4, 'text-anchor': 'end', class: last ? 'last' : '' }, label);
    });

    for (let i = 1; i < 10; i++) {
        const x = Math.round(X0 + i * (X1 - X0) / 10) + 0.5;
        add(plot, 'path', { class: 'grid', d: `M${x} ${pane.top + 3}V${pane.bottom}` });
    }

    add(plot, 'rect', { class: 'frame', x: X0 + 0.5, y: pane.top + 0.5, width: X1 - X0, height: pane.bottom - pane.top });

    pane.traces.forEach(function (trace, i) {
        add(plot, 'path', { class: 'trace', stroke: trace.color, d: tracePath(pane, trace) });
        add(plot, 'text', { x: i ? 789 : 308, y: pane.top - 5, 'text-anchor': 'middle', style: 'fill:' + trace.color }, trace.name);
    });
});

add(plot, 'path', { class: 'trace', stroke: '#00ff00', d: `M${X0 + 0.5} 255V124.5H${X1}` });
add(plot, 'text', { x: 549, y: 119, 'text-anchor': 'middle', style: 'fill:#00ff00' }, 'V(a)');

for (let i = 0; i <= 10; i++) {
    const x = Math.round(X0 + i * (X1 - X0) / 10) + 0.5;
    add(plot, 'path', { class: 'tick', d: `M${x} 717V724` });
    add(plot, 'text', { x: x, y: 738, 'text-anchor': 'middle', class: 'last' }, (i * 0.2).toFixed(1) + 's');
}

// Schematic
const sheet = document.getElementById('schematic');

let dots = '';
for (let row = 0; row < 16; row++) {
    for (let col = 0; col < 62; col++) {
        dots += `M${Math.round(21 + col * 16.83)} ${Math.round(786 + row * 16.87)}h1v1h-1z`;
    }
}
add(sheet, 'path', { d: dots, 'shape-rendering': 'crispEdges' });

function node(x, y) {
    add(sheet, 'rect', { class: 'node', x: x - 2, y: y - 2, width: 5, height: 5 });
}

function label(x, y, text, cls) {
    add(sheet, 'text', { x: x, y: y, class: cls || '' }, text);
}

// Source side and the common rails
add(sheet, 'path', { class: 'wire', d: 'M88.5 951V837.5H130.5V820.5H257.5V913.5H290.5V820.5H930.5V850' });
add(sheet, 'path', { class: 'wire', d: 'M88.5 984V1014.5H130.5V1031.5H257.5V938.5H290.5V1031.5H930.5V997M231.5 1031V1039' });
add(sheet, 'path', { class: 'symbol', d: 'M222 1039.5H241L231.5 1048.5zM88.5 952V962M84 957.5H94M84 978.5H94' });
add(sheet, 'circle', { class: 'symbol', cx: 88.5, cy: 967.5, r: 16 });
add(sheet, 'path', { class: 'divider', d: 'M274 795V1030' });
node(231, 1031);
label(81, 971, 'V1');
label(177, 817, 'A');
label(236, 795, 'links', 'comment');
label(290, 795, 'rechts', 'comment');
label(248, 1047, '.tran 2');
label(77, 1062, 'PULSE(-5 5 1m 1n 1n)');

const branches = [
    { x: 366, r: 'R1', c: 'C11', l: 'L4', henry: '25.33', hz: 100 },
    { x: 475, r: 'R2', c: 'C5', l: 'L5', henry: '6.3215', hz: 200 },
    { x: 585, r: 'R3', c: 'C7', l: 'L2', henry: '2.8145', hz: 300 },
    { x: 702, r: 'R4', c: 'C9', l: 'L3', henry: '1.5831', hz: 400 },
    { x: 812, r: 'R5', c: 'C16', l: 'L16', henry: '1.0132', hz: 500 },
    { x: 930, r: 'R6', c: 'C4', l: 'L1', henry: '0.253', hz: 1000 }
];

branches.forEach(function (b) {
    const long = b.hz === 1000;
    const g = add(sheet, 'g', { transform: `translate(${b.x} 0)` });
    add(g, 'path', { class: 'wire', d: 'M.5 820V850M.5 883V930M-16.5 961V930.5H8.5V947M-16.5 966V997.5H8.5V989M.5 997V1031' });
    add(g, 'path', { class: 'symbol', d: 'M.5 847V850L9 855-8 863 9 871-8 879 .5 883V888M-25 961.5H-8M-25 965.5H-8' });
    add(g, 'path', { class: 'symbol', d: 'M9 947C14 947 17 951 17 956 17 961 14 963 9 963 4 964 2 963 2 961 2 960 5 959 9 960 15 961 17 964 17 968 17 973 14 975 9 975 4 976 2 975 2 974 2 972 5 971 9 972 15 973 17 977 17 981 17 986 14 989 9 989' });

    node(b.x, 930);
    node(b.x, 997);
    if (!long) {
        node(b.x, 820);
        node(b.x, 1031);
    }

    label(b.x + 10, 862, b.r);
    label(b.x + 10, 881, '1meg');
    label(b.x + (long ? 4 : 13), long ? 921 : 925, b.hz + ' Hz', 'comment');
    label(b.x - 36, 948, b.c);
    label(b.x - 49, 980, '100n');
    label(b.x + 18, 945, b.l);
    label(b.x + 19, 985, b.henry);
    add(sheet, 'text', { class: 'netname', transform: `translate(${b.x - 3} ${long ? 926 : 922}) rotate(-90)` }, 's_' + b.hz);
});
```
